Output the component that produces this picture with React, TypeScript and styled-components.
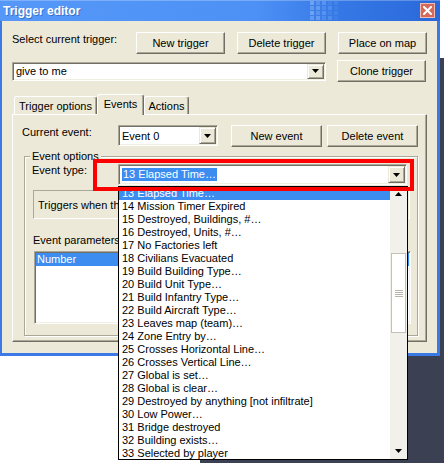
import React from "react";
import styled, { createGlobalStyle } from "styled-components";

const FONT = `"Liberation Sans", Arial, sans-serif`;
const FACE = "#ece9d8";
const SHADOW = "#716f64";
const MID = "#aca899";
const LIGHT = "#f1efe2";
const SELECT = "#3d8cf0";

const GlobalStyle = createGlobalStyle`
  html, body { margin: 0; padding: 0; }
  body { font-family: ${FONT}; font-size: 11px; color: #000; overflow: hidden; }
  * { box-sizing: border-box; }
`;

const Desktop = styled.div`
  position: relative;
  width: 444px;
  height: 463px;
  overflow: hidden;
  background:
    linear-gradient(#fff, #fff) 0 356px / 200px 107px no-repeat,
    linear-gradient(#fff, #fff) 440px 0 / 4px 58px no-repeat,
    #3b4153;
`;

const Window = styled.div`
  width: 440px;
  height: 356px;
  display: flex;
  flex-direction: column;
`;

const TitleBar = styled.div`
  height: 21px;
  flex: none;
  display: flex;
  align-items: center;
  padding: 0 5px 0 3px;
  background: linear-gradient(to right, #5598f8 0%, #4d91f6 58%, #3679e6 76%, #2a68da 100%);
  box-shadow: inset 0 1px rgba(255, 255, 255, 0.25);
`;

const Title = styled.div`
  font: bold 12px ${FONT};
  color: #fff;
  text-shadow: 1px 1px 0 rgba(10, 36, 106, 0.35);
  white-space: nowrap;
`;

const Decoration = styled.svg`
  margin-left: auto;
  margin-right: 82px;
  flex: none;
  display: block;
`;

const CloseButton = styled.div`
  width: 15px;
  height: 15px;
  flex: none;
  background: #d5695c;
  border: 1px solid #efbcb3;
  display: flex;
  align-items: center;
  justify-content: center;
`;

const Frame = styled.div`
  flex: 1;
  display: flex;
  border-style: solid;
  border-color: #3a79e6;
  border-width: 0 3px 3px 2px;
`;

const Body = styled.div`
  flex: 1;
  background: ${FACE};
  padding: 11px 0 0 10px;
  display: flex;
  flex-direction: column;
`;

const Row = styled.div<{ $mt?: number; $align?: string; $gap?: number }>`
  display: flex;
  align-items: ${(p) => p.$align ?? "flex-start"};
  height: 22px;
  flex: none;
  margin-top: ${(p) => p.$mt ?? 0}px;
  gap: ${(p) => p.$gap ?? 0}px;
`;

const Label = styled.div<{ $w: number; $pt?: number; $ml?: number; $mt?: number }>`
  width: ${(p) => p.$w}px;
  flex: none;
  line-height: 13px;
  padding-top: ${(p) => p.$pt ?? 0}px;
  margin-left: ${(p) => p.$ml ?? 0}px;
  margin-top: ${(p) => p.$mt ?? 0}px;
  white-space: nowrap;
  overflow: hidden;
`;

const ButtonGroup = styled.div<{ $gap: number; $ml?: number }>`
  display: flex;
  gap: ${(p) => p.$gap}px;
  margin-left: ${(p) => p.$ml ?? 0}px;
`;

const Button = styled.button<{ $w: number }>`
  width: ${(p) => p.$w}px;
  height: 22px;
  flex: none;
  padding: 0;
  font: 11px ${FONT};
  color: #000;
  background: ${FACE};
  border: 1px solid;
  border-color: #fff ${SHADOW} ${SHADOW} #fff;
  box-shadow: inset -1px -1px ${MID};
`;

const Combo = styled.div<{ $w: number; $h: number }>`
  width: ${(p) => p.$w}px;
  height: ${(p) => p.$h}px;
  flex: none;
  display: flex;
  background: #fff;
  border: 1px solid;
  border-color: ${MID} #fff #fff ${MID};
  box-shadow: inset 1px 1px ${SHADOW}, inset -1px -1px ${LIGHT};
  padding: 1px;
`;

const ComboField = styled.div`
  flex: 1;
  display: flex;
  align-items: center;
  padding-left: 2px;
  white-space: nowrap;
  overflow: hidden;
`;

const Selection = styled.span`
  background: ${SELECT};
  color: #fff;
  line-height: 13px;
  padding: 0 1px;
`;

const DropButton = styled.div`
  width: 17px;
  flex: none;
  display: flex;
  align-items: center;
  justify-content: center;
  background: ${FACE};
  border: 1px solid;
  border-color: ${FACE} ${SHADOW} ${SHADOW} ${FACE};
  box-shadow: inset 1px 1px #fff, inset -1px -1px ${MID};
`;

const TabStrip = styled.div`
  display: flex;
  align-items: flex-end;
  height: 20px;
  flex: none;
  margin-top: 12px;
  padding-left: 2px;
  position: relative;
  z-index: 1;
`;

const Tab = styled.div<{ $w: number; $active?: boolean }>`
  width: ${(p) => p.$w}px;
  height: ${(p) => (p.$active ? 21 : 18)}px;
  margin-bottom: ${(p) => (p.$active ? -1 : 0)}px;
  padding-bottom: ${(p) => (p.$active ? 3 : 0)}px;
  background: ${FACE};
  border-top: 1px solid #fff;
  border-left: 1px solid #fff;
  border-right: 1px solid ${SHADOW};
  box-shadow: inset -1px 0 ${MID};
  border-radius: 3px 3px 0 0;
  display: flex;
  align-items: center;
  justify-content: center;
  white-space: nowrap;
`;

const TabPanel = styled.div`
  width: 415px;
  height: 228px;
  flex: none;
  border-top: 1px solid #fff;
  border-left: 1px solid #fff;
  border-right: 1px solid ${SHADOW};
  border-bottom: 1px solid ${SHADOW};
  box-shadow: inset -1px -1px ${MID};
  padding: 10px 0 0 9px;
  display: flex;
  flex-direction: column;
`;

const GroupBox = styled.div`
  width: 394px;
  height: 180px;
  flex: none;
  margin: 9px 0 0 2px;
  border: 1px solid ${MID};
  box-shadow: inset 1px 1px #fff, 1px 1px #fff;
  padding: 0 0 0 7px;
  display: flex;
  flex-direction: column;
`;

const Legend = styled.div`
  align-self: flex-start;
  line-height: 13px;
  margin: -7px 0 0 -2px;
  padding: 0 2px;
  background: ${FACE};
  white-space: nowrap;
`;

const DescriptionBox = styled.div`
  width: 377px;
  height: 29px;
  flex: none;
  margin: 4px 0 0 1px;
  border: 1px solid;
  border-color: ${MID} #fff #fff ${MID};
  padding-left: 4px;
  display: flex;
  align-items: center;
`;

const DescriptionText = styled.span`
  width: 80px;
  white-space: nowrap;
  overflow: hidden;
`;

const ListBox = styled.div`
  width: 377px;
  height: 73px;
  flex: none;
  margin: 4px 0 0 2px;
  background: #fff;
  border: 1px solid;
  border-color: ${MID} #fff #fff ${MID};
  box-shadow: inset 1px 1px ${SHADOW}, inset -1px -1px ${LIGHT};
  padding: 1px;
`;

const ListRow = styled.div<{ $selected?: boolean }>`
  height: 13px;
  line-height: 13px;
  padding-left: 1px;
  background: ${(p) => (p.$selected ? SELECT : "transparent")};
  color: ${(p) => (p.$selected ? "#fff" : "#000")};
`;

const DropList = styled.div`
  position: absolute;
  left: 118px;
  top: 186px;
  width: 290px;
  height: 274px;
  border: 1px solid #000;
  background: #fff;
  display: flex;
  overflow: hidden;
  z-index: 2;
`;

const DropItems = styled.div`
  flex: 1;
  display: flex;
  flex-direction: column;
  overflow: hidden;
`;

const DropItem = styled.div<{ $selected?: boolean }>`
  height: 13px;
  flex: none;
  line-height: 13px;
  padding-left: 3px;
  white-space: nowrap;
  background: ${(p) => (p.$selected ? SELECT : "transparent")};
  color: ${(p) => (p.$selected ? "#fff" : "#000")};
`;

const ScrollBar = styled.div`
  width: 17px;
  flex: none;
  background: #f1f0ea;
  display: flex;
  flex-direction: column;
  align-items: center;
`;

const ScrollArrow = styled.div<{ $down?: boolean }>`
  height: 17px;
  width: 17px;
  flex: none;
  display: flex;
  justify-content: center;
  align-items: ${(p) => (p.$down ? "flex-end" : "flex-start")};
  padding: ${(p) => (p.$down ? "0 0 6px" : "5px 0 0")};
`;

const Thumb = styled.div`
  width: 15px;
  height: 80px;
  flex: none;
  margin-top: 49px;
  background: #fff;
  border: 1px solid #c4c1b4;
  display: flex;
  align-items: center;
  justify-content: center;
`;

const Spacer = styled.div`
  flex: 1;
`;

const Annotation = styled.div`
  position: absolute;
  left: 93px;
  top: 159px;
  width: 321px;
  height: 32px;
  border: 4px solid #ff0000;
  z-index: 3;
  pointer-events: none;
`;

const Arrow = ({ up }: { up?: boolean }) => (
  <svg width="7" height="4" viewBox="0 0 7 4" style={{ display: "block" }}>
    <polygon points={up ? "0,4 7,4 3.5,0" : "0,0 7,0 3.5,4"} fill="#000" />
  </svg>
);

const ComboBox = ({ w, h, children }: { w: number; h: number; children: React.ReactNode }) => (
  <Combo $w={w} $h={h}>
    <ComboField>{children}</ComboField>
    <DropButton>
      <Arrow />
    </DropButton>
  </Combo>
);

const items = [
  "13 Elapsed Time…",
  "14 Mission Timer Expired",
  "15 Destroyed, Buildings, #…",
  "16 Destroyed, Units, #…",
  "17 No Factories left",
  "18 Civilians Evacuated",
  "19 Build Building Type…",
  "20 Build Unit Type…",
  "21 Build Infantry Type…",
  "22 Build Aircraft Type…",
  "23 Leaves map (team)…",
  "24 Zone Entry by…",
  "25 Crosses Horizontal Line…",
  "26 Crosses Vertical Line…",
  "27 Global is set…",
  "28 Global is clear…",
  "29 Destroyed by anything [not infiltrate]",
  "30 Low Power…",
  "31 Bridge destroyed",
  "32 Building exists…",
  "33 Selected by player",
];

const decoSquares: { x: number; y: number; o: number }[] = [];
for (let c = 0; c < 5; c++) {
  for (let r = 0; r < 4; r++) {
    const o = Math.max(0.08, 0.45 - c * 0.08 - ((r + c) % 2) * 0.1);
    decoSquares.push({ x: c * 6, y: r * 5 + 1, o });
  }
}

export default function App() {
  return (
    <>
      <GlobalStyle />
      <Desktop>
        <Window>
          <TitleBar>
            <Title>Trigger editor</Title>
            <Decoration width="28" height="21" viewBox="0 0 28 21">
              {decoSquares.map((s, i) => (
                <rect key={i} x={s.x} y={s.y} width="4" height="4" fill="#a9ccff" opacity={s.o} />
              ))}
            </Decoration>
            <CloseButton>
              <svg width="9" height="9" viewBox="0 0 9 9">
                <path d="M1 1 L8 8 M8 1 L1 8" stroke="#fff" strokeWidth="2" strokeLinecap="square" />
              </svg>
            </CloseButton>
          </TitleBar>
          <Frame>
            <Body>
              <Row>
                <Label $w={124} $pt={1}>
                  Select current trigger:
                </Label>
                <ButtonGroup $gap={12}>
                  <Button $w={89}>New trigger</Button>
                  <Button $w={89}>Delete trigger</Button>
                  <Button $w={89}>Place on map</Button>
                </ButtonGroup>
              </Row>
              <Row $mt={6} $align="center" $gap={11}>
                <ComboBox w={314} h={19}>
                  give to me
                </ComboBox>
                <Button $w={89}>Clone trigger</Button>
              </Row>
              <TabStrip>
                <Tab $w={83}>Trigger options</Tab>
                <Tab $w={47} $active>
                  Events
                </Tab>
                <Tab $w={45}>Actions</Tab>
              </TabStrip>
              <TabPanel>
                <Row>
                  <Label $w={96} $pt={1}>
                    Current event:
                  </Label>
                  <ComboBox w={100} h={21}>
                    Event 0
                  </ComboBox>
                  <ButtonGroup $gap={5} $ml={13}>
                    <Button $w={91}>New event</Button>
                    <Button $w={91}>Delete event</Button>
                  </ButtonGroup>
                </Row>
                <GroupBox>
                  <Legend>Event options</Legend>
                  <Row $mt={1}>
                    <Label $w={86}>Event type:</Label>
                    <ComboBox w={289} h={21}>
                      <Selection>13 Elapsed Time…</Selection>
                    </ComboBox>
                  </Row>
                  <DescriptionBox>
                    <DescriptionText>Triggers when the specified time has elapsed.</DescriptionText>
                  </DescriptionBox>
                  <Label $w={85} $ml={1} $mt={15}>
                    Event parameters
                  </Label>
                  <ListBox>
                    <ListRow $selected>Number</ListRow>
                  </ListBox>
                </GroupBox>
              </TabPanel>
            </Body>
          </Frame>
        </Window>
        <DropList>
          <DropItems>
            {items.map((t, i) => (
              <DropItem key={t} $selected={i === 0}>
                {t}
              </DropItem>
            ))}
          </DropItems>
          <ScrollBar>
            <ScrollArrow>
              <Arrow up />
            </ScrollArrow>
            <Thumb>
              <svg width="8" height="7" viewBox="0 0 8 7">
                {[0, 2, 4, 6].map((y) => (
                  <rect key={y} x="0" y={y} width="8" height="1" fill="#b9b6a8" />
                ))}
              </svg>
            </Thumb>
            <Spacer />
            <ScrollArrow $down>
              <Arrow />
            </ScrollArrow>
          </ScrollBar>
        </DropList>
        <Annotation />
      </Desktop>
    </>
  );
}
